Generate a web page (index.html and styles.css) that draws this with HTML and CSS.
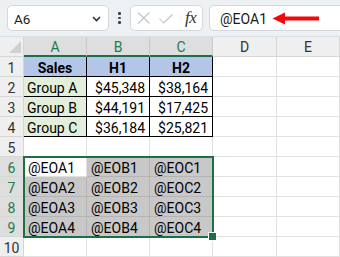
FILE: index.html
```html
<!DOCTYPE html>
<html>
<head>
<meta charset="utf-8">
<link rel="stylesheet" href="styles.css">
</head>
<body>
<div class="app">
  <div class="toolbar">
    <div class="namebox">
      <span class="name">A6</span>
      <svg class="chev" width="9" height="6" viewBox="0 0 9 6"><path d="M1 1 L4.5 4.5 L8 1" fill="none" stroke="#333" stroke-width="1.6"/></svg>
    </div>
    <div class="dots"><i></i><i></i><i></i></div>
    <div class="fxbox">
      <svg width="14" height="12" viewBox="0 0 14 12" class="ico-x"><path d="M1 0.5 L12.5 11.5 M12.5 0.5 L1 11.5" stroke="#c4c4c4" stroke-width="1.1" fill="none"/></svg>
      <svg width="14" height="10" viewBox="0 0 14 10" class="ico-check"><path d="M0.5 4.5 L4.5 9 L13.5 0.5" stroke="#c4c4c4" stroke-width="1.1" fill="none"/></svg>
      <span class="fx">fx</span>
    </div>
    <div class="formula">
      <span class="ftext">@EOA1</span>
      <svg class="arrow" width="50" height="16" viewBox="0 0 50 16"><polygon points="0.5,7.5 13,1.5 13,5.5 47,5.5 47,9.5 13,9.5 13,13.5" fill="#f00a0a"/></svg>
    </div>
  </div>
  <div class="sheet">
    <div class="grid">
      <div class="corner"><svg width="12" height="12" viewBox="0 0 12 12"><polygon points="12,0 12,12 0,12" fill="#cfcfcf"/></svg></div>
      <div class="ch sel">A</div><div class="ch sel">B</div><div class="ch sel">C</div><div class="ch">D</div><div class="ch">E</div>

      <div class="rh">1</div><div class="c tb th">Sales</div><div class="c tb th">H1</div><div class="c tb th">H2</div><div class="c"></div><div class="c"></div>
      <div class="rh">2</div><div class="c tb grp">Group A</div><div class="c tb num">$45,348</div><div class="c tb num">$38,164</div><div class="c"></div><div class="c"></div>
      <div class="rh">3</div><div class="c tb grp">Group B</div><div class="c tb num">$44,191</div><div class="c tb num">$17,425</div><div class="c"></div><div class="c"></div>
      <div class="rh">4</div><div class="c tb grp">Group C</div><div class="c tb num">$36,184</div><div class="c tb num">$25,821</div><div class="c"></div><div class="c"></div>
      <div class="rh">5</div><div class="c"></div><div class="c"></div><div class="c"></div><div class="c"></div><div class="c"></div>
      <div class="rh rsel">6</div><div class="c active">@EOA1</div><div class="c s">@EOB1</div><div class="c s">@EOC1</div><div class="c"></div><div class="c"></div>
      <div class="rh rsel">7</div><div class="c s">@EOA2</div><div class="c s">@EOB2</div><div class="c s">@EOC2</div><div class="c"></div><div class="c"></div>
      <div class="rh rsel">8</div><div class="c s">@EOA3</div><div class="c s">@EOB3</div><div class="c s">@EOC3</div><div class="c"></div><div class="c"></div>
      <div class="rh rsel">9</div><div class="c s">@EOA4</div><div class="c s">@EOB4</div><div class="c s">@EOC4</div><div class="c"></div><div class="c"></div>
      <div class="rh">10</div><div class="c"></div><div class="c"></div><div class="c"></div><div class="c"></div><div class="c"></div>
    </div>
    <div class="selection"><div class="handle"></div></div>
  </div>
</div>
</body>
</html>
```

FILE: styles.css
```css
* { box-sizing: border-box; }
html, body { margin: 0; padding: 0; }
body {
  width: 340px;
  height: 257px;
  overflow: hidden;
  background: #ffffff;
  font-family: Roboto, "Liberation Sans", sans-serif;
  color: #000;
}
.app { width: 340px; height: 257px; overflow: hidden; }

.toolbar {
  height: 37px;
  background: #eef1f4;
  display: flex;
  align-items: flex-start;
  padding: 5px 0 0 7px;
  border-bottom: 1px solid #dcdfe2;
}
.namebox {
  width: 102px;
  height: 26px;
  background: #fff;
  border: 1px solid #d5d8db;
  border-radius: 5px;
  display: flex;
  align-items: center;
  justify-content: space-between;
  padding: 0 7px 0 6px;
}
.name { font-size: 13.5px; color: #1a1a1a; padding-top: 1px; }
.chev { margin-top: 1px; }
.dots {
  width: 21px;
  height: 26px;
  display: flex;
  flex-direction: column;
  align-items: center;
  justify-content: center;
  gap: 2px;
}
.dots i { display: block; width: 2.5px; height: 2.5px; background: #444; border-radius: 1px; }
.fxbox {
  width: 73px;
  height: 26px;
  background: #fff;
  border: 1px solid #d5d8db;
  border-radius: 5px;
  display: flex;
  align-items: center;
  padding: 0 0 0 6px;
}
.ico-x { margin-right: 8px; }
.ico-check { margin-right: 12px; margin-top: 2px; }
.fx {
  font-family: "Liberation Serif", "DejaVu Serif", serif;
  font-style: italic;
  font-size: 17px;
  color: #333;
  letter-spacing: -0.5px;
}
.formula {
  flex: 1;
  height: 26px;
  margin-left: 6px;
  margin-right: -6px;
  background: #fff;
  border: 1px solid #d5d8db;
  border-radius: 5px;
  position: relative;
  display: flex;
  align-items: center;
  padding-left: 10px;
}
.ftext { font-size: 14px; color: #1a1a1a; padding-top: 1px; }
.arrow { position: absolute; left: 62px; top: 5px; }

.sheet { position: relative; }
.grid {
  display: grid;
  grid-template-columns: 24px 63px 63px 63px 64px 63px;
  grid-auto-rows: 20px;
}
.corner {
  background: #efefef;
  border-right: 1px solid #d6d6d6;
  border-bottom: 1px solid #d6d6d6;
  display: flex;
  align-items: flex-end;
  justify-content: flex-end;
  padding: 0 2px 3px 0;
}
.ch {
  background: #efefef;
  border-right: 1px solid #d6d6d6;
  border-bottom: 1px solid #d6d6d6;
  font-size: 14px;
  text-align: center;
  line-height: 20px;
  color: #333;
}
.ch.sel {
  background: #dedede;
  color: #1f7a4d;
  border-bottom: 2px solid #1e6f46;
  border-right-color: #c9c9c9;
}
.rh {
  background: #efefef;
  border-right: 1px solid #d6d6d6;
  border-bottom: 1px solid #d6d6d6;
  font-size: 14px;
  text-align: center;
  line-height: 20px;
  padding-top: 1px;
  color: #333;
}
.rh.rsel { background: #dedede; color: #1f7a4d; }
.c {
  border-right: 1px solid #e1e1e1;
  border-bottom: 1px solid #e1e1e1;
  font-size: 14px;
  line-height: 20px;
  padding: 1px 3px 0 3px;
  white-space: nowrap;
  overflow: visible;
}
.c.tb { border-right-color: #000; border-bottom-color: #000; }
.c.th { background: #b4c6e7; font-weight: bold; text-align: center; }
.c.grp { background: #e2efda; }
.c.num { text-align: right; padding-right: 4px; }
.c.s { background: #c8c8c8; border-right-color: #b4b4b4; border-bottom-color: #b4b4b4; padding-left: 4px; }
.c.active { background: #fff; padding-left: 4px; }

.selection {
  position: absolute;
  left: 23px;
  top: 119px;
  width: 191px;
  height: 82px;
  border: 2px solid #1e6f46;
  pointer-events: none;
}
.handle {
  position: absolute;
  right: -5px;
  bottom: -5px;
  width: 7px;
  height: 7px;
  background: #1e6f46;
  border: 1px solid #fff;
  box-sizing: content-box;
}
```
